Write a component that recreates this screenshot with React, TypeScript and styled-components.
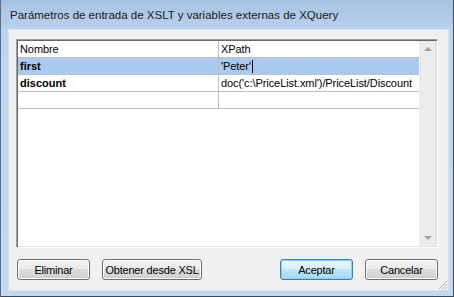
import styled, { createGlobalStyle } from "styled-components";

const GlobalStyle = createGlobalStyle`
  html, body {
    margin: 0;
    padding: 0;
    background: #ffffff;
  }
  * {
    box-sizing: border-box;
  }
`;

type Param = {
  name: string;
  xpath: string;
  selected?: boolean;
  editing?: boolean;
};

const params: Param[] = [
  { name: "first", xpath: "'Peter'", selected: true, editing: true },
  { name: "discount", xpath: "doc('c:\\PriceList.xml')/PriceList/Discount" },
  { name: "", xpath: "" },
];

const App = () => {
  return (
    <>
      <GlobalStyle />
      <Window>
        <TitleBar>Parámetros de entrada de XSLT y variables externas de XQuery</TitleBar>
        <Client>
          <ListBox>
            <Grid>
              <Row>
                <Cell>Nombre</Cell>
                <Cell $divider>XPath</Cell>
              </Row>
              {params.map((p, i) => (
                <Row key={i} $selected={p.selected}>
                  <Cell $bold>{p.name}</Cell>
                  <Cell $divider>
                    {p.xpath}
                    {p.editing && <Caret />}
                  </Cell>
                </Row>
              ))}
            </Grid>
            <ScrollBar>
              <ArrowUp />
              <ArrowDown />
            </ScrollBar>
          </ListBox>
          <ButtonRow>
            <Button $width={73}>Eliminar</Button>
            <Button $width={100}>Obtener desde XSL</Button>
            <Spacer />
            <Button $width={73} $default>
              Aceptar
            </Button>
            <Button $width={73}>Cancelar</Button>
          </ButtonRow>
          <Grip width="10" height="10" viewBox="0 0 10 10">
            <path d="M9 1L1 9M9 4L4 9M9 7L7 9" stroke="#b8b8b8" strokeWidth="1" />
          </Grip>
        </Client>
      </Window>
    </>
  );
};
export default App;

const Window = styled.div`
  width: 454px;
  height: 297px;
  background: linear-gradient(180deg, #a6c3e3 0%, #bcd4ee 12%, #c2d8ef 100%);
  border: 1px solid #3b4a5e;
  border-top: none;
  border-left-color: #5a6d85;
  display: flex;
  flex-direction: column;
  padding: 0 4px 5px 7px;
`;

const TitleBar = styled.div`
  height: 29px;
  padding: 9px 0 0 2px;
  font-family: "Liberation Sans", Arial, sans-serif;
  font-size: 11.5px;
  color: #1b1b1b;
  white-space: nowrap;
`;

const Client = styled.div`
  flex: 1;
  background: #f0f0f0;
  border: 1px solid #d7e2ee;
  display: flex;
  flex-direction: column;
  padding: 9px 10px 10px 7px;
  position: relative;
`;

const ListBox = styled.div`
  height: 209px;
  display: flex;
  background: #ffffff;
  border-top: 1px solid #a0a0a0;
  border-left: 1px solid #a0a0a0;
  border-right: 1px solid #ffffff;
  border-bottom: 1px solid #ffffff;
  box-shadow: inset 1px 1px 0 #696969, inset -1px -1px 0 #e3e3e3;
  padding: 1px 1px 1px 1px;
`;

const Grid = styled.div`
  flex: 1;
  display: flex;
  flex-direction: column;
`;

const Row = styled.div<{ $selected?: boolean }>`
  height: 17px;
  display: grid;
  grid-template-columns: 200px 1fr;
  border-bottom: 1px solid #c0c0c0;
  background: ${(p) => (p.$selected ? "#a8caee" : "#ffffff")};
`;

const Cell = styled.div<{ $bold?: boolean; $divider?: boolean }>`
  font-family: "Liberation Sans", Arial, sans-serif;
  font-size: 11px;
  font-weight: ${(p) => (p.$bold ? 700 : 400)};
  letter-spacing: ${(p) => (p.$bold ? "0" : "-0.08px")};
  color: #000000;
  line-height: 16px;
  padding-left: 2px;
  white-space: nowrap;
  overflow: hidden;
  border-left: ${(p) => (p.$divider ? "1px solid #c0c0c0" : "none")};
  display: flex;
  align-items: center;
`;

const Caret = styled.span`
  display: inline-block;
  width: 1px;
  height: 13px;
  background: #000000;
  margin-left: 1px;
`;

const ScrollBar = styled.div`
  width: 17px;
  background: #ececec;
  border-left: 1px solid #f6f6f6;
  box-shadow: inset 1px 0 0 #e2e2e2, inset -1px 0 0 #e2e2e2;
  display: flex;
  flex-direction: column;
  justify-content: space-between;
  align-items: center;
  padding: 6px 0 6px 0;
`;

const ArrowUp = styled.div`
  width: 0;
  height: 0;
  border-left: 4px solid transparent;
  border-right: 4px solid transparent;
  border-bottom: 4px solid #a3a3a3;
`;

const ArrowDown = styled.div`
  width: 0;
  height: 0;
  border-left: 4px solid transparent;
  border-right: 4px solid transparent;
  border-top: 4px solid #a3a3a3;
`;

const ButtonRow = styled.div`
  display: flex;
  gap: 12px;
  margin-top: 11px;
  padding-left: 1px;
`;

const Spacer = styled.div`
  flex: 1;
`;

const Button = styled.div<{ $width: number; $default?: boolean }>`
  width: ${(p) => `${p.$width}px`};
  height: 21px;
  border-radius: 3px;
  border: 1px solid ${(p) => (p.$default ? "#3c7fb1" : "#707070")};
  background: ${(p) =>
    p.$default
      ? "linear-gradient(180deg, #eaf6fd 0%, #d9f0fc 45%, #bee6fd 50%, #a7d9f5 100%)"
      : "linear-gradient(180deg, #f2f2f2 0%, #ebebeb 45%, #dddddd 50%, #cfcfcf 100%)"};
  box-shadow: ${(p) =>
    p.$default ? "inset 0 0 0 1px #7ed6f7" : "inset 0 0 0 1px #fbfbfb"};
  font-family: "Liberation Sans", Arial, sans-serif;
  font-size: 11px;
  letter-spacing: -0.2px;
  color: #000000;
  display: flex;
  align-items: center;
  justify-content: center;
  white-space: nowrap;
`;

const Grip = styled.svg`
  position: absolute;
  right: 0;
  bottom: 0;
`;
